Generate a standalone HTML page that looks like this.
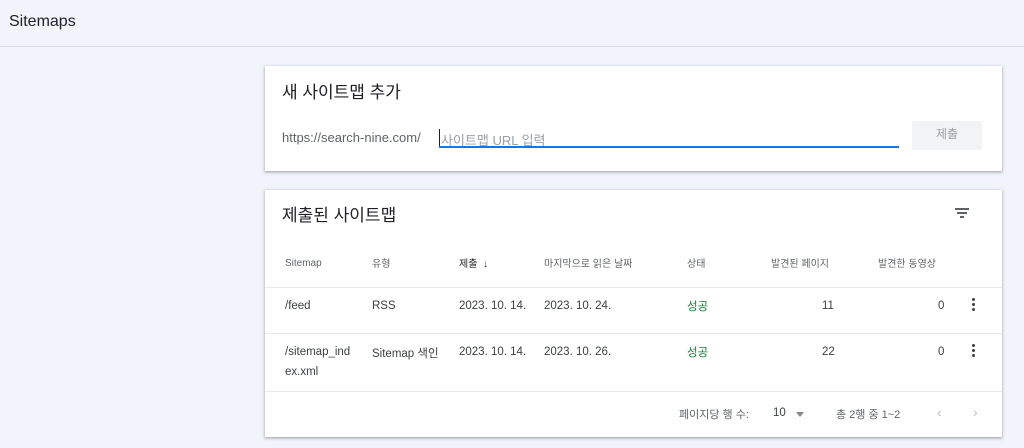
<!DOCTYPE html>
<html><head><meta charset="utf-8"><style>
body{margin:0;width:1024px;height:448px;background:#f1f4fb;font-family:"Liberation Sans","Noto Sans CJK KR",sans-serif;position:relative;overflow:hidden;color:#3c4043}
.top{position:absolute;left:0;top:0;width:1024px;height:46px;border-bottom:1px solid #dadce0}
.top span{position:absolute;left:9px;top:13px;font-size:16px;color:#202124}
.card{position:absolute;left:265px;width:737px;background:#fff;box-shadow:0 1px 2px rgba(60,64,67,.3),0 1px 3px 1px rgba(60,64,67,.15)}
.a{position:absolute;white-space:nowrap}
.h{font-size:17px;color:#202124}
.t{font-size:11.5px;color:#3c4043}
.th{font-size:10px;color:#5f6368}
.line{position:absolute;left:0;width:737px;height:1px;background:#e8eaed}
.dots{position:absolute;width:3px}
.dots i{display:block;width:3px;height:3px;border-radius:2px;background:#3c4043;margin-bottom:2px}
</style></head><body>
<div class="top"><span>Sitemaps</span></div>
<div class="card" style="top:66px;height:105px">
 <div class="a h" style="left:17px;top:12px">새 사이트맵 추가</div>
 <div class="a" style="left:17px;top:64px;font-size:13px;color:#5f6368">https://search-nine.com/</div>
 <div class="a" style="left:174px;top:63px;width:1px;height:17px;background:#202124"></div>
 <div class="a" style="left:176px;top:64px;font-size:13px;color:#9aa0a6">사이트맵 URL 입력</div>
 <div class="a" style="left:174px;top:80px;width:460px;height:2px;background:#1a73e8"></div>
 <div class="a" style="left:647px;top:55px;width:70px;height:29px;background:#f1f3f4;border-radius:2px;color:#9aa0a6;font-size:12px;text-align:center;line-height:27px">제출</div>
</div>
<div class="card" style="top:190px;height:247px">
 <div class="a h" style="left:17px;top:11px">제출된 사이트맵</div>
 <div class="a" style="left:690px;top:18px;width:14px;height:2px;background:#5f6368"></div>
 <div class="a" style="left:692px;top:22px;width:10px;height:2px;background:#5f6368"></div>
 <div class="a" style="left:695px;top:26px;width:4px;height:2px;background:#5f6368"></div>
 <div class="a th" style="left:20px;top:68px">Sitemap</div>
 <div class="a th" style="left:107px;top:65px">유형</div>
 <div class="a th" style="left:194px;top:65px;color:#202124">제출 &nbsp;↓</div>
 <div class="a th" style="left:279px;top:65px">마지막으로 읽은 날짜</div>
 <div class="a th" style="left:422px;top:65px">상태</div>
 <div class="a th" style="left:506px;top:65px">발견된 페이지</div>
 <div class="a th" style="left:613px;top:65px">발견한 동영상</div>
 <div class="line" style="top:97px"></div>
 <div class="a t" style="left:20px;top:110px">/feed</div>
 <div class="a t" style="left:107px;top:110px">RSS</div>
 <div class="a t" style="left:194px;top:110px">2023. 10. 14.</div>
 <div class="a t" style="left:279px;top:110px">2023. 10. 24.</div>
 <div class="a t" style="left:422px;top:108px;color:#188038">성공</div>
 <div class="a t" style="left:557px;top:110px">11</div>
 <div class="a t" style="left:673px;top:110px">0</div>
 <div class="dots" style="left:707px;top:108px"><i></i><i></i><i></i></div>
 <div class="line" style="top:143px"></div>
 <div class="a t" style="left:20px;top:156px">/sitemap_ind</div>
 <div class="a t" style="left:20px;top:176px">ex.xml</div>
 <div class="a t" style="left:107px;top:155px">Sitemap 색인</div>
 <div class="a t" style="left:194px;top:156px">2023. 10. 14.</div>
 <div class="a t" style="left:279px;top:156px">2023. 10. 26.</div>
 <div class="a t" style="left:422px;top:154px;color:#188038">성공</div>
 <div class="a t" style="left:557px;top:156px">22</div>
 <div class="a t" style="left:673px;top:156px">0</div>
 <div class="dots" style="left:707px;top:154px"><i></i><i></i><i></i></div>
 <div class="line" style="top:201px"></div>
 <div class="a th" style="left:414px;top:216px;font-size:11px">페이지당 행 수:</div>
 <div class="a t" style="left:508px;top:217px">10</div>
 <div class="a" style="left:531px;top:222px;width:0;height:0;border-left:4px solid transparent;border-right:4px solid transparent;border-top:5px solid #80868b"></div>
 <div class="a th" style="left:571px;top:216px;font-size:11px">총 2행 중 1~2</div>
 <div class="a" style="left:672px;top:214px;color:#bdc1c6;font-size:14px">‹</div>
 <div class="a" style="left:708px;top:214px;color:#bdc1c6;font-size:14px">›</div>
</div>
</body></html>
